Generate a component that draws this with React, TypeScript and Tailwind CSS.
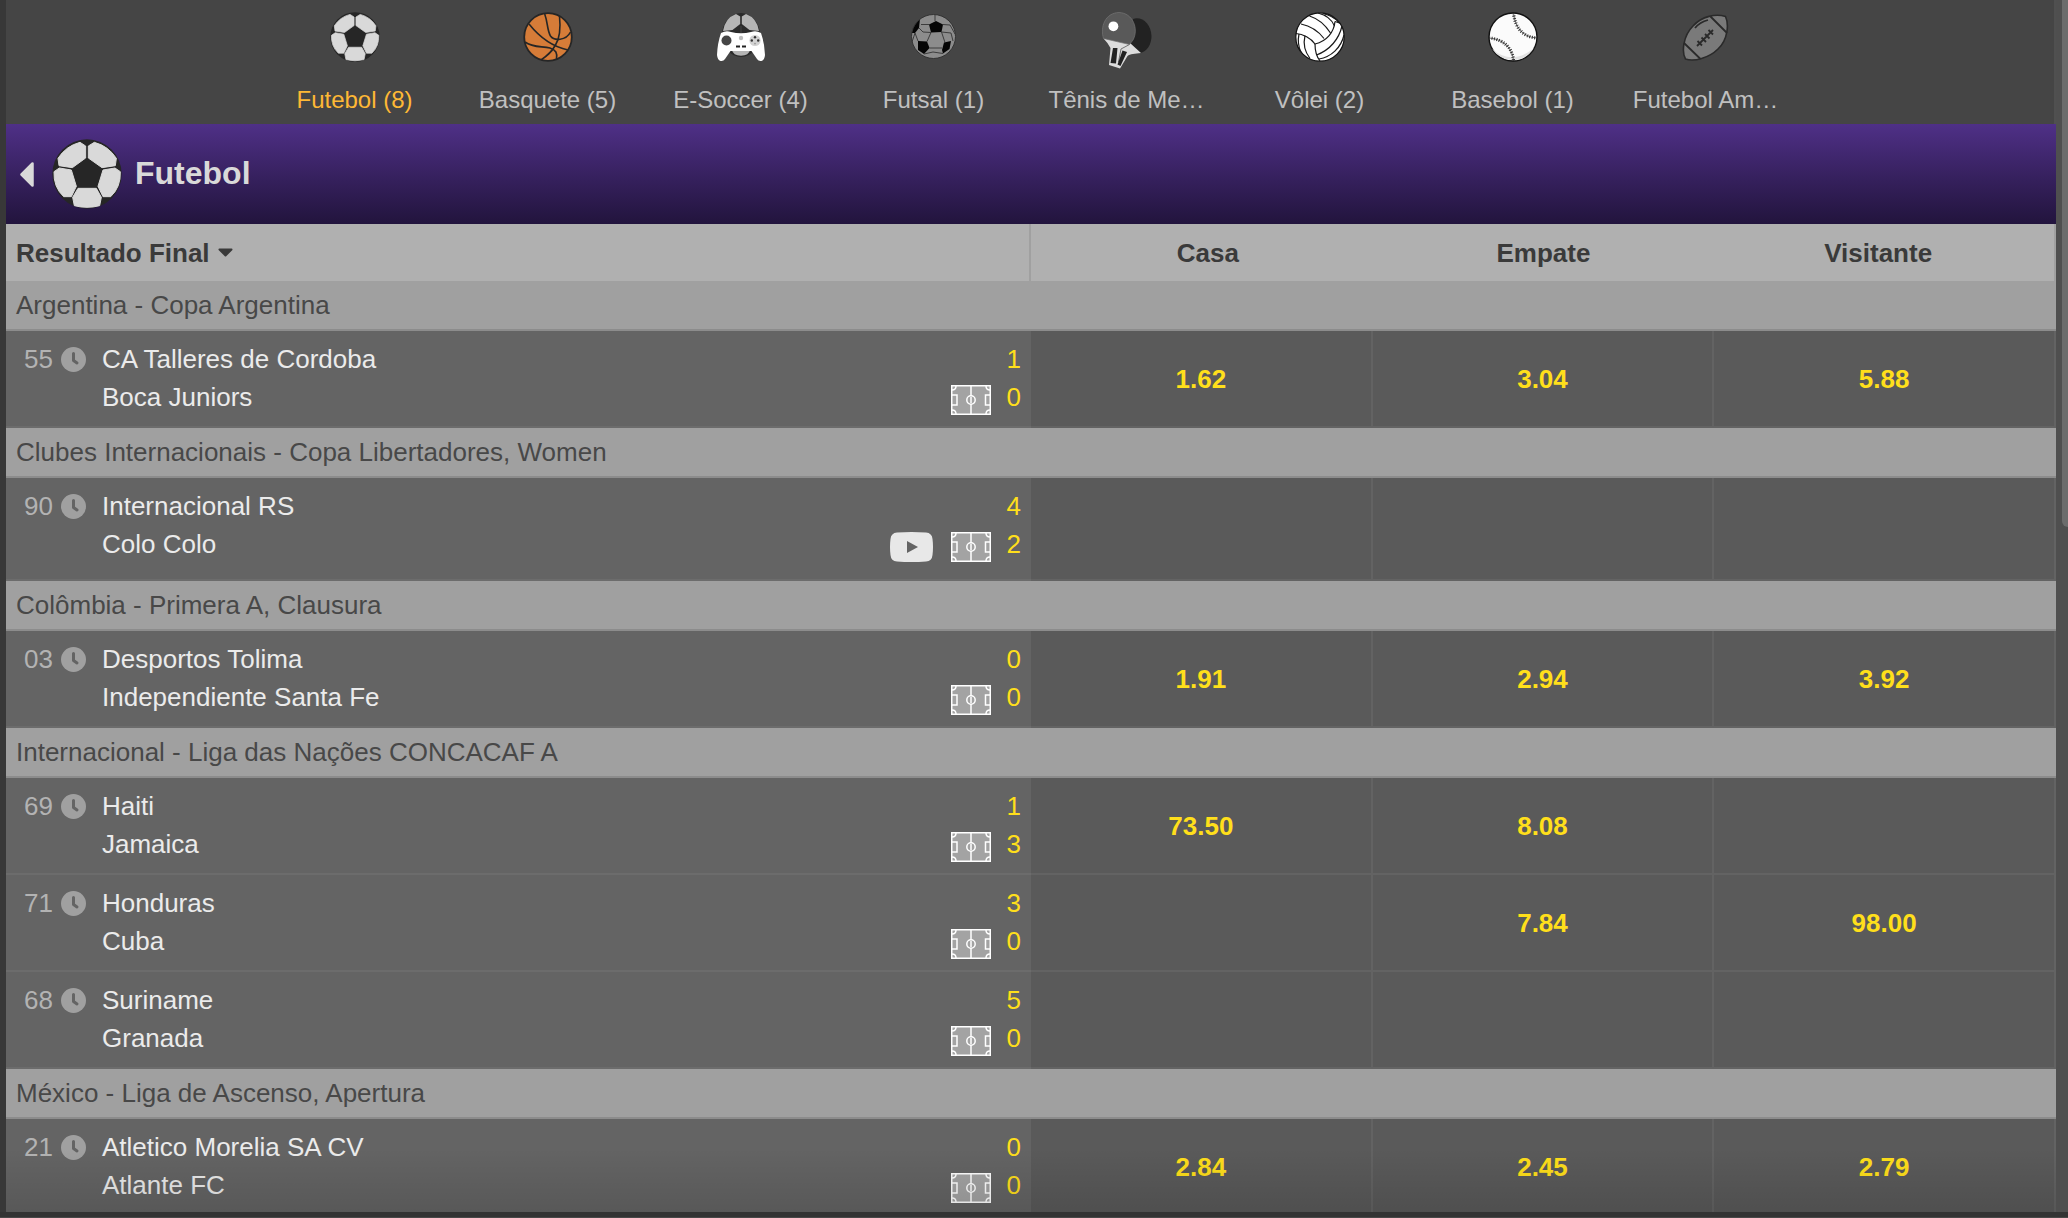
import type { ReactNode } from "react";
import clsx from "clsx";

type Match = {
  minute: string;
  teams: [string, string];
  score: [string, string];
  odds: [string, string, string];
  video?: boolean;
};

type League = { name: string; matches: Match[] };

const leagues: League[] = [
  {
    name: "Argentina - Copa Argentina",
    matches: [
      {
        minute: "55",
        teams: ["CA Talleres de Cordoba", "Boca Juniors"],
        score: ["1", "0"],
        odds: ["1.62", "3.04", "5.88"],
      },
    ],
  },
  {
    name: "Clubes Internacionais - Copa Libertadores, Women",
    matches: [
      {
        minute: "90",
        teams: ["Internacional RS", "Colo Colo"],
        score: ["4", "2"],
        odds: ["", "", ""],
        video: true,
      },
    ],
  },
  {
    name: "Colômbia - Primera A, Clausura",
    matches: [
      {
        minute: "03",
        teams: ["Desportos Tolima", "Independiente Santa Fe"],
        score: ["0", "0"],
        odds: ["1.91", "2.94", "3.92"],
      },
    ],
  },
  {
    name: "Internacional - Liga das Nações CONCACAF A",
    matches: [
      { minute: "69", teams: ["Haiti", "Jamaica"], score: ["1", "3"], odds: ["73.50", "8.08", ""] },
      { minute: "71", teams: ["Honduras", "Cuba"], score: ["3", "0"], odds: ["", "7.84", "98.00"] },
      { minute: "68", teams: ["Suriname", "Granada"], score: ["5", "0"], odds: ["", "", ""] },
    ],
  },
  {
    name: "México - Liga de Ascenso, Apertura",
    matches: [
      {
        minute: "21",
        teams: ["Atletico Morelia SA CV", "Atlante FC"],
        score: ["0", "0"],
        odds: ["2.84", "2.45", "2.79"],
      },
    ],
  },
];

/* ---------- sport icons ---------- */

function SoccerBall({ className }: { className: string }) {
  return (
    <svg viewBox="0 0 208 210" className={className} aria-hidden="true">
      <circle cx="104" cy="105" r="104" fill="#262626" />
      <g fill="#d9d9d9" stroke="#d9d9d9" strokeWidth="3" strokeLinejoin="round">
        <path d="M83 10 L100 21 V57 L60 86 L20 80 L17 58 Q41 21 83 10Z" />
        <path d="M126 10 L108 21 V57 L149 86 L189 80 L192 58 Q168 21 126 10Z" />
        <path d="M21 87 L57 93 L72 142 L57 173 L34 173 Q3 144 5 98Z" />
        <path d="M188 87 L152 93 L137 142 L152 173 L175 173 Q206 144 204 98Z" />
        <path d="M77 148 H132 L147 175 L142 200 Q104 210 66 200 L61 175Z" />
      </g>
    </svg>
  );
}

function Basketball() {
  return (
    <svg viewBox="0 0 50 50" className="size-[50px]" aria-hidden="true">
      <circle cx="25" cy="25" r="23.8" fill="#d67c38" stroke="#262626" strokeWidth="1.8" />
      <g fill="none" stroke="#262626" strokeWidth="1.6">
        <path d="M21.7 2 C25 11 24 18 27.5 24 C31 29 43 29 47.5 20" />
        <path d="M36.5 4 C37.5 14 37 26 32.5 33 C28 41 24 44 18 48" />
        <path d="M6 12 C14 22 26 34 45 38" />
        <path d="M2 30 C10 36 19 34 27 36 C33 38 34.5 41 33.5 47" />
      </g>
    </svg>
  );
}

function ESoccer() {
  return (
    <svg viewBox="0 0 48 50" className="h-[50px] w-12" aria-hidden="true">
      <ellipse cx="24" cy="23" rx="19" ry="22" fill="#2b2b2b" />
      <g fill="#b5b5b5">
        <path d="M19 2 L23.2 4.5 V12 L15.5 18 L6 19 Q8 6 19 2Z" />
        <path d="M29 2 L24.8 4.5 V12 L32.5 18 L42 19 Q40 6 29 2Z" />
        <path d="M15 38 H33 Q32 43.5 24 43.8 Q16 43.5 15 38Z" />
      </g>
      <path
        d="M4 21 Q9 18 14 20 Q24 22.5 34 20 Q39 18 44 21 Q47.5 31 48 43 Q47.5 48 44.5 49 Q41.5 49.5 40 47 L34.5 39 H13.5 L8 47 Q6.500 49.5 3.5 49 Q0.5 48 0 43 Q0.5 31 4 21Z"
        fill="#fff"
      />
      <circle cx="9.5" cy="28.5" r="5" fill="#454545" />
      <circle cx="24" cy="26" r="2.2" fill="#bdbdbd" />
      <path d="M24 14 V21" stroke="#454545" strokeWidth="1" />
      <path d="M19 34.5 H23 M25 34.5 H29" stroke="#222" strokeWidth="2" />
      <circle cx="38" cy="28.5" r="5.6" fill="#d2d2d2" />
      <g fill="#333">
        <circle cx="38" cy="25.2" r="1.2" />
        <circle cx="34.8" cy="28.5" r="1.2" />
        <circle cx="41.2" cy="28.5" r="1.2" />
        <circle cx="38" cy="31.6" r="0.9" fill="#999" />
      </g>
    </svg>
  );
}

function FutsalBall() {
  return (
    <svg viewBox="0 0 45 45" className="mt-0.5 size-[45px]" aria-hidden="true">
      <clipPath id="futsal-clip">
        <circle cx="22.5" cy="22.5" r="22" />
      </clipPath>
      <g clipPath="url(#futsal-clip)">
        <rect width="45" height="45" fill="#8c8c8c" />
        <g fill="#050505">
          <path d="M0 19 V10 L9 5 L8 14 L4 19Z" />
          <path d="M18 10.5 L25 7 L32 10.5 L30.5 18 L20 18.5Z" />
          <path d="M7 27 L16 27.5 L18.5 34 L13 40 L7 36Z" />
          <path d="M31 36 L33 28.5 L40 27 L38.5 35 L32 39.5Z" />
        </g>
        <path
          d="M18 10.5 H10 M4 19 L1 28 M20 18.5 L16 27.5 M20 18.5 L12 18 L8 14 M30.5 18 L34 28.5 M32 10.5 L39 11 L44 20 M24 7 V1 M18.5 34 H31 M30.500 18 L40 19 L42 27 M7 27 L4 19 M13 40 L22 38 L32 39.5"
          fill="none"
          stroke="#333"
          strokeWidth="0.9"
        />
      </g>
      <circle cx="22.5" cy="22.5" r="22" fill="none" stroke="#333" strokeWidth="1" />
    </svg>
  );
}

function TableTennis() {
  return (
    <svg viewBox="0 0 50 57" className="h-[57px] w-[50px]" aria-hidden="true">
      <path d="M31 7 C40 4 49 12 49.5 24 C49.5 32 45 40 38 41 L27 34Z" fill="#222" />
      <path
        d="M1.5 26.5 L28 31 L39 41 C33 41.500 28 42 25.5 44 L18 56.5 L7 53 L8.500 36 Q6 31 1.5 26.5Z"
        fill="#dcdcdc"
      />
      <path
        d="M1.5 26.5 C-2 15 3 1 17 0.5 C31 1 37 17 31 28 L27.5 32.5Z"
        fill="#595959"
        stroke="#757575"
        strokeWidth="0.7"
      />
      <path d="M27.5 32.5 L19 37 L16.5 50" fill="none" stroke="#666" strokeWidth="0.9" />
      <path d="M11 36 H15.5 L14 51.5 L8.5 51Z" fill="#222" />
      <path d="M20.5 38.5 L25 40 L18.5 54 L15.5 52.5Z" fill="#222" />
      <circle cx="11.4" cy="14.3" r="4.9" fill="#fff" />
    </svg>
  );
}

function Volleyball() {
  return (
    <svg viewBox="0 0 50 50" className="size-[50px]" aria-hidden="true">
      <circle cx="25" cy="25" r="24.2" fill="#fff" stroke="#111" strokeWidth="1.2" />
      <g fill="none" stroke="#1a1a1a" strokeWidth="1.2">
        <path d="M1 21.5 C8 22 16 26 20 32 C32 29 39 20 40 9.5" />
        <path d="M6 12 C16 14 24 20 29 26.5" />
        <path d="M14.5 4 C24 7 31 14 35.5 21" />
        <path d="M23 1 C31 3 37 8 39.5 14" />
        <path d="M28 1.500 C35 3 41 7 44.5 11 L40 9.5" />
        <path d="M20 32 C20 39 21 44 25 49" />
        <path d="M10 23.5 C8 32 10 40 15 46.5" />
        <path d="M4 22 C2.5 29 4 36 6 40" />
        <path d="M47 14 C44 27 35 38 21.5 43" />
        <path d="M49 23 C46 36 36 45 24 47" />
      </g>
    </svg>
  );
}

function Baseball() {
  return (
    <svg viewBox="0 0 50 50" className="size-[50px]" aria-hidden="true">
      <circle cx="25" cy="25" r="24" fill="#fbfbfb" stroke="#111" strokeWidth="1.4" />
      <path d="M4 37 Q24 54 46 36 Q38 48 25 48 Q12 48 4 37Z" fill="#e2e2e2" />
      <g fill="none" stroke="#333">
        <path d="M25.5 1 C27 15 34 25 49 26" strokeWidth="0.7" />
        <path d="M1 26 C16 27 25 37 25.5 49" strokeWidth="0.7" />
        <path d="M25.5 1 C27 15 34 25 49 26" strokeWidth="3.2" strokeDasharray="1 1.5" />
        <path d="M1 26 C16 27 25 37 25.5 49" strokeWidth="3.2" strokeDasharray="1 1.5" />
      </g>
    </svg>
  );
}

function Football() {
  return (
    <svg viewBox="0 0 47 47" className="mt-0.5 size-[47px]" aria-hidden="true">
      <path
        d="M43.500 2.5 C47 10 46 26 36 35 C27 44 12 48 3.5 45 C-0.5 38 1 22 11 12 C20 2 34 -0.5 43.5 2.5Z"
        fill="#7a7a7a"
        stroke="#2a2a2a"
        strokeWidth="1.6"
      />
      <g fill="none" stroke="#2a2a2a" strokeWidth="1.8">
        <path d="M28.5 2.5 L45 19 M2 29 L18.5 45" />
        <path d="M13 14 Q18 8 26 6" />
        <path d="M15 32 L31 16 M15.5 27 L20 31.5 M19.5 23.5 L24 28 M23 20 L27.5 24.5 M26.5 16 L31 20.5" />
      </g>
    </svg>
  );
}

/* ---------- row icons ---------- */

function ClockIcon() {
  return (
    <svg viewBox="0 0 25 25" className="size-[25px]" aria-hidden="true">
      <circle cx="12.5" cy="12.5" r="12.5" fill="#a0a0a0" />
      <path
        d="M12.5 6.5 V13.5 L16 16"
        fill="none"
        stroke="#646464"
        strokeWidth="3"
        strokeLinecap="round"
        strokeLinejoin="round"
      />
    </svg>
  );
}

function PitchIcon() {
  return (
    <svg viewBox="0 0 40 30" className="h-[30px] w-10" aria-hidden="true">
      <rect width="40" height="30" fill="#a3a3a3" />
      <g fill="none" stroke="#fff" strokeWidth="1.5">
        <rect x="0.75" y="0.75" width="38.5" height="28.5" />
        <path d="M20 0 V30" />
        <circle cx="20" cy="15" r="4.2" fill="#a3a3a3" />
        <path d="M1 10 H6 V20 H1 M39 10 H34.5 V20 H39" />
        <path d="M1 5 Q5 5 5 1 M35 1 Q35 5 39 5 M1 25 Q5 25 5 29 M35 29 Q35 25 39 25" />
      </g>
      <path d="M20 12 V18" stroke="#fff" strokeWidth="1.5" />
    </svg>
  );
}

function VideoIcon() {
  return (
    <svg viewBox="0 0 43 30" className="h-[30px] w-[43px]" aria-hidden="true">
      <path
        d="M7 0.5 Q21.5 -0.5 36 0.5 Q42 1 42.5 7 Q43.5 15 42.5 23 Q42 29 36 29.5 Q21.5 30.5 7 29.5 Q1 29 0.5 23 Q-0.5 15 0.5 7 Q1 1 7 0.5Z"
        fill="#e8e8e8"
      />
      <path d="M17 9 L28 15 L17 21Z" fill="#646464" />
    </svg>
  );
}

const sports: { label: string; icon: ReactNode }[] = [
  { label: "Futebol (8)", icon: <SoccerBall className="size-[50px]" /> },
  { label: "Basquete (5)", icon: <Basketball /> },
  { label: "E-Soccer (4)", icon: <ESoccer /> },
  { label: "Futsal (1)", icon: <FutsalBall /> },
  { label: "Tênis de Me…", icon: <TableTennis /> },
  { label: "Vôlei (2)", icon: <Volleyball /> },
  { label: "Basebol (1)", icon: <Baseball /> },
  { label: "Futebol Am…", icon: <Football /> },
];

function SportsNav() {
  return (
    <nav className="flex h-[124px] shrink-0 justify-center border-r-2 border-[#505050] bg-[#454545]">
      {sports.map((sport, i) => (
        <button
          key={sport.label}
          type="button"
          className={clsx(
            "flex w-[193px] flex-col items-center pt-3 text-2xl",
            i === 0 ? "text-[#feb835]" : "text-[#c0c0c0]"
          )}
        >
          <span className="flex h-[72px] items-start">{sport.icon}</span>
          <span className="whitespace-nowrap">{sport.label}</span>
        </button>
      ))}
    </nav>
  );
}

function SportHeader() {
  return (
    <header className="flex h-[100px] shrink-0 items-center bg-linear-to-b from-[#4f3087] to-[#22143d] pl-3.5">
      <button type="button" aria-label="Voltar" className="mr-[18px]">
        <svg viewBox="0 0 14 25" className="h-[25px] w-3.5" aria-hidden="true">
          <path
            d="M12.5 1.5 V23.5 L1.5 12.5Z"
            fill="#d9d9d9"
            stroke="#d9d9d9"
            strokeWidth="2.5"
            strokeLinejoin="round"
          />
        </svg>
      </button>
      <SoccerBall className="size-[70px]" />
      <h1 className="ml-[13px] pb-0.5 text-[32px] font-bold text-[#d9d9d9]">Futebol</h1>
    </header>
  );
}

function MatchRow({ match }: { match: Match }) {
  return (
    <tr className={match.video ? "h-[103px]" : "h-[97px]"}>
      <td className="border-b-2 border-[#6c6c6c] bg-[#646464] pt-[9px] pr-2.5 pl-[18px] align-top">
        <div className="flex">
          <div className="flex h-[38px] w-[78px] items-center gap-2">
            <span className="text-[#b3b3b3]">{match.minute}</span>
            <ClockIcon />
          </div>
          <div className="flex-1 text-[#ebebeb]">
            <div>{match.teams[0]}</div>
            <div>{match.teams[1]}</div>
          </div>
          <div className="flex items-end gap-[18px] pr-4 pb-px">
            {match.video && <VideoIcon />}
            <PitchIcon />
          </div>
          <div className="text-[#ffdf1b]">
            <div>{match.score[0]}</div>
            <div>{match.score[1]}</div>
          </div>
        </div>
      </td>
      {match.odds.map((odd, i) => (
        <td key={i} className="border-r-2 border-b-2 border-[#636363] bg-[#5a5a5a] text-center">
          {odd && (
            <button type="button" className="font-bold text-[#ffdf1b]">
              {odd}
            </button>
          )}
        </td>
      ))}
    </tr>
  );
}

function OddsTable() {
  return (
    <table className="w-full table-fixed border-separate border-spacing-0 text-[26px] leading-[38px]">
      <colgroup>
        <col className="w-1/2" />
        <col />
        <col />
        <col />
      </colgroup>
      <thead>
        <tr className="h-[57px] bg-[#b0b0b0] text-[#3a3a3a]">
          <th className="border-r-2 border-[#a0a0a0] pl-2.5 text-left">
            <label className="flex items-center gap-2">
              <select
                aria-label="Mercado"
                className="field-sizing-content appearance-none font-bold outline-none"
              >
                <option>Resultado Final</option>
              </select>
              <svg viewBox="0 0 15 9" className="h-[9px] w-[15px]" aria-hidden="true">
                <path
                  d="M1.5 1.5 H13.5 L7.5 7.5Z"
                  fill="#3a3a3a"
                  stroke="#3a3a3a"
                  strokeWidth="2"
                  strokeLinejoin="round"
                />
              </svg>
            </label>
          </th>
          <th className="pl-3">Casa</th>
          <th>Empate</th>
          <th className="border-r-2 border-[#a0a0a0] pr-3">Visitante</th>
        </tr>
      </thead>
      {leagues.map((league) => (
        <tbody key={league.name}>
          <tr className="h-[50px]">
            <th
              colSpan={4}
              className="border-b-2 border-[#8c8c8c] bg-[#a0a0a0] pl-2.5 text-left font-normal text-[#484848]"
            >
              {league.name}
            </th>
          </tr>
          {league.matches.map((match) => (
            <MatchRow key={match.teams[0]} match={match} />
          ))}
        </tbody>
      ))}
    </table>
  );
}

export default function App() {
  return (
    <div className="flex h-screen flex-col overflow-hidden border-b border-[#484848] bg-[#333] pb-[5px] font-['Liberation_Sans',Arial,sans-serif]">
      <div className="flex min-h-0 flex-1 bg-[#383838] pl-1.5">
        <main className="relative flex min-w-0 flex-1 flex-col overflow-hidden">
          <SportsNav />
          <SportHeader />
          <OddsTable />

          {/* Fade along the bottom edge */}
          <div className="pointer-events-none absolute inset-x-0 bottom-0 h-16 bg-linear-to-b from-transparent to-black/12" />
        </main>

        {/* Scroll track */}
        <div className="flex w-3 shrink-0 justify-end bg-[#4f4f4f]">
          <div className="h-[527px] w-1.5 rounded-bl-md bg-[#6c6c6c]" />
        </div>
      </div>
    </div>
  );
}
